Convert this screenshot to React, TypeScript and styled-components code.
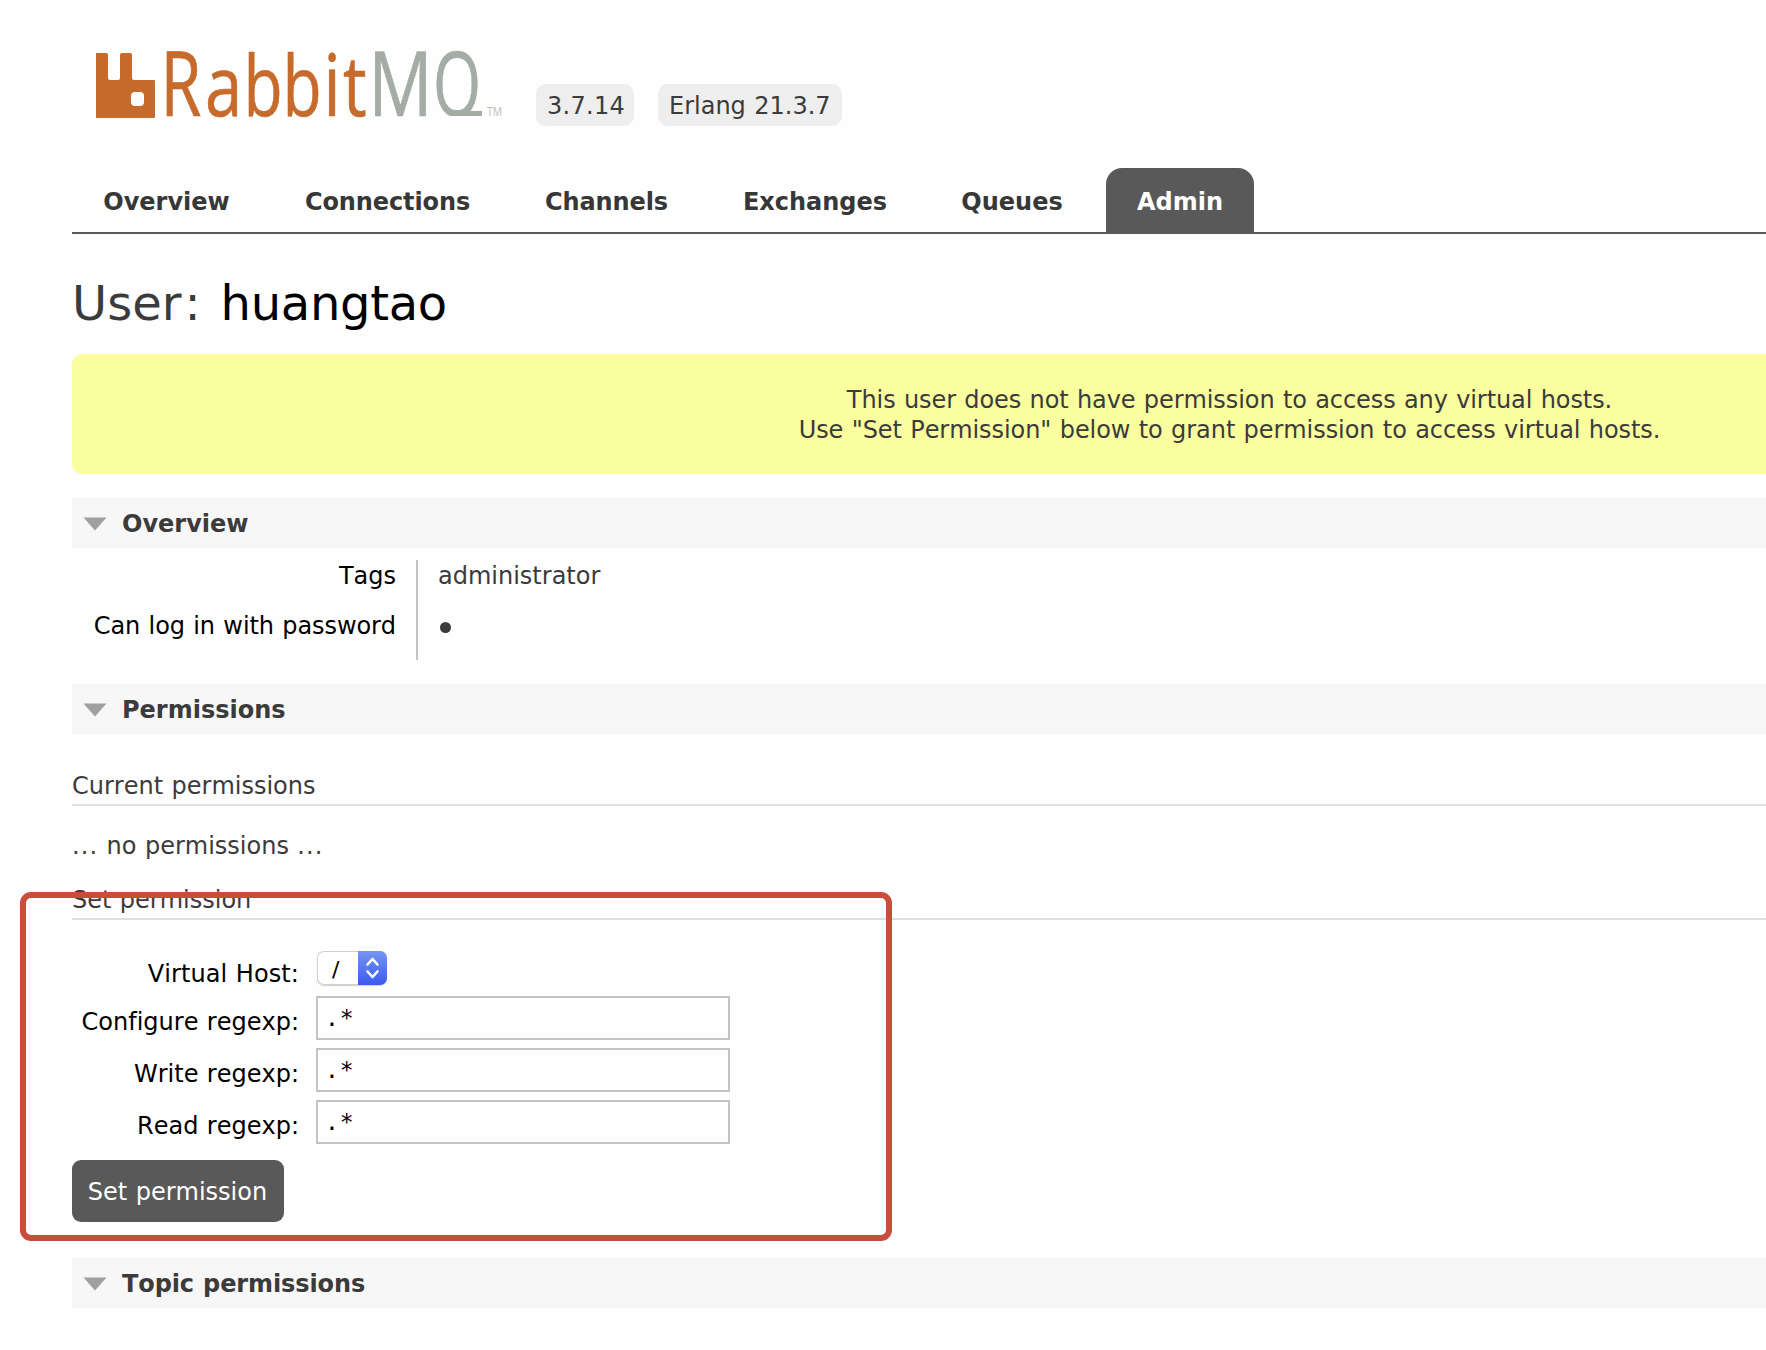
import React from 'react';
import styled, { createGlobalStyle } from 'styled-components';

const GlobalStyle = createGlobalStyle`
  html, body { margin: 0; padding: 0; background: #fefefe; }
  body {
    font-family: Verdana, "DejaVu Sans", sans-serif;
    font-size: 24px;
    line-height: 30px;
    color: #3b3b3b;
    font-kerning: none;
    font-variant-ligatures: none;
    word-spacing: 0.8px;
  }
  *, *::before, *::after { box-sizing: border-box; }
`;

const Page = styled.div`
  position: relative;
  width: 1766px;
  height: 1350px;
  overflow: hidden;
  padding-left: 72px;
`;

const Content = styled.div`
  width: 2315px;
`;

const Text = styled.span<{ $ls?: number }>`
  letter-spacing: ${(p) => p.$ls ?? 0}px;
  white-space: pre;
`;

const Header = styled.header`
  display: flex;
  align-items: flex-start;
  height: 168px;
  padding-left: 24px;
`;

const Logo = styled.svg`
  display: block;
  width: 416px;
  height: 160px;
`;

const Badges = styled.div`
  display: flex;
  gap: 24px;
  margin: 84px 0 0 24px;
`;

const Badge = styled.div<{ $width: number }>`
  width: ${(p) => p.$width}px;
  height: 42px;
  padding-left: 11px;
  border-radius: 10px;
  background: #eeeeee;
  line-height: 44px;
`;

const Tabs = styled.nav`
  display: flex;
  gap: 13px;
  height: 66px;
  border-bottom: 2px solid #595959;
`;

const Tab = styled.a<{ $width: number; $active?: boolean }>`
  width: ${(p) => p.$width}px;
  height: 64px;
  padding-top: 4px;
  border-radius: 16px 16px 0 0;
  background: ${(p) => (p.$active ? '#595959' : 'transparent')};
  color: ${(p) => (p.$active ? '#ffffff' : '#373737')};
  font-weight: bold;
  line-height: 60px;
  text-align: center;
`;

const Title = styled.h1`
  display: flex;
  margin: 39px 0 21px;
  font-size: 48px;
  font-weight: normal;
  line-height: 60px;
`;

const Colon = styled.span`
  margin: 0 20px 0 3px;
`;

const UserName = styled.b`
  color: #000000;
  font-weight: normal;
  letter-spacing: -0.3px;
`;

const Warning = styled.div`
  height: 120px;
  padding-top: 31px;
  border-radius: 10px;
  background: #fbfe9f;
  text-align: center;
`;

const SectionHead = styled.h2<{ $gap: number }>`
  display: flex;
  align-items: center;
  gap: 15px;
  height: 50px;
  margin: ${(p) => p.$gap}px 0 0;
  padding: 2px 0 0 11px;
  background: #f7f7f7;
  font-size: 24px;
  font-weight: bold;
  line-height: 48px;
`;

const Arrow = styled.svg`
  display: block;
  width: 24px;
  height: 14px;
`;

const Facts = styled.dl`
  display: grid;
  grid-template-columns: 346px 400px;
  grid-auto-rows: 50px;
  margin: 12px 0 0;
  line-height: 32px;
`;

const Term = styled.dt`
  padding-right: 20px;
  border-right: 2px solid #c3c3c3;
  color: #000000;
  text-align: right;
`;

const Value = styled.dd`
  margin: 0;
  padding-left: 20px;
`;

const Dot = styled.span`
  display: block;
  width: 11px;
  height: 11px;
  margin: 12px 0 0 2px;
  border-radius: 50%;
  background: #3b3b3b;
`;

const SubHead = styled.h3<{ $gap: number }>`
  margin: ${(p) => p.$gap}px 0 0;
  padding-bottom: 3px;
  border-bottom: 2px solid #dfdfdf;
  font-size: 24px;
  font-weight: normal;
`;

const Note = styled.p`
  margin: 25px 0 0;
`;

const Form = styled.form`
  display: flex;
  flex-direction: column;
  align-items: flex-start;
  gap: 8px;
  margin-top: 31px;
`;

const Field = styled.div<{ $height?: number }>`
  display: flex;
  align-items: flex-start;
  gap: 17px;
  height: ${(p) => p.$height ?? 44}px;
`;

const Label = styled.label<{ $drop?: number }>`
  width: 227px;
  padding-top: ${(p) => p.$drop ?? 11}px;
  color: #000000;
  text-align: right;
`;

const Input = styled.input`
  width: 414px;
  height: 44px;
  padding: 1px 8px 1px 7px;
  border: 2px solid #c3c3c3;
  border-radius: 0;
  outline: none;
  background: #ffffff;
  color: #000000;
  font: 23px "DejaVu Sans Mono", monospace;
  letter-spacing: 1px;
`;

const Select = styled.div`
  display: flex;
  justify-content: space-between;
  width: 70px;
  height: 34px;
  margin-left: 1px;
  padding-left: 15px;
  border-radius: 7px;
  background: #ffffff;
  box-shadow: inset 0 0 0 1px #cfcfcf, 0 1px 1px rgba(0, 0, 0, 0.18);
  color: #000000;
  font: 22px/37px "DejaVu Sans", sans-serif;
  overflow: hidden;
`;

const Stepper = styled.svg`
  display: block;
  width: 29px;
  height: 34px;
  background: linear-gradient(#7595f3, #3b5aef);
`;

const Submit = styled.button`
  width: 212px;
  height: 62px;
  margin-top: 8px;
  padding: 2px 1px 0 0;
  border: 0;
  border-radius: 9px;
  background: #595959;
  color: #ffffff;
  font: inherit;
  line-height: 60px;
  word-spacing: inherit;
`;

const Highlight = styled.div`
  position: absolute;
  left: 20px;
  top: 892px;
  width: 872px;
  height: 349px;
  border: 6px solid #c94d3b;
  border-radius: 11px;
  pointer-events: none;
`;

const ORANGE = '#c66b2c';
const GREY = '#a4aca6';

const wordmark = [
  { ch: 'R', x: 160.5, sx: 0.74, sy: 1, fill: ORANGE },
  { ch: 'a', x: 205, sx: 0.75, sy: 0.94, fill: ORANGE },
  { ch: 'b', x: 243.5, sx: 0.715, sy: 0.94, fill: ORANGE },
  { ch: 'b', x: 282.5, sx: 0.715, sy: 0.94, fill: ORANGE },
  { ch: 'i', x: 323.2, sx: 0.78, sy: 0.95, fill: ORANGE },
  { ch: 't', x: 343, sx: 0.74, sy: 0.94, fill: ORANGE },
  { ch: 'M', x: 368.3, sx: 0.8, sy: 1, fill: GREY },
];

function RabbitLogo() {
  return (
    <Logo viewBox="96 0 416 160">
      <defs>
        <clipPath id="bowl">
          <rect x="430" y="0" width="60" height="116" />
        </clipPath>
      </defs>
      <path
        fill={ORANGE}
        fillRule="evenodd"
        d="M96 53h10q2 0 2 2v23q0 2 2 2h8q2 0 2-2V55q0-2 2-2h8q2 0 2 2v23q0 2 2 2h20q1 0 1 1v36q0 1-1 1H96zM135 92q-4 0-4 4v6q0 4 4 4h5q4 0 4-4v-6q0-4-4-4z"
      />
      <g fontFamily='"Open Sans", sans-serif' fontSize="89.6" strokeWidth="0.7">
        {wordmark.map((g, i) => (
          <text key={i} fill={g.fill} stroke={g.fill} transform={`translate(${g.x} 116) scale(${g.sx} ${g.sy})`}>
            {g.ch}
          </text>
        ))}
        <g clipPath="url(#bowl)">
          <text fill={GREY} stroke={GREY} transform="translate(433 116) scale(0.69 1)">Q</text>
        </g>
      </g>
      <rect x="455" y="111" width="27" height="5" fill={GREY} />
      <text x="487" y="116" fontFamily='"Open Sans", sans-serif' fontSize="13" textLength="15" lengthAdjust="spacingAndGlyphs" fill="#b9bfba">
        TM
      </text>
    </Logo>
  );
}

const tabs = [
  { name: 'Overview', width: 189 },
  { name: 'Connections', width: 227, ls: -0.1 },
  { name: 'Channels', width: 185, ls: -0.1 },
  { name: 'Exchanges', width: 206 },
  { name: 'Queues', width: 162 },
  { name: 'Admin', width: 148, active: true },
];

function Section({ title, gap, ls }: { title: string; gap: number; ls?: number }) {
  return (
    <SectionHead $gap={gap}>
      <Arrow viewBox="0 0 24 14">
        <path d="M0.500 0.500h23L12 13.500z" fill="#a0a0a0" />
      </Arrow>
      <Text $ls={ls}>{title}</Text>
    </SectionHead>
  );
}

export default function App() {
  return (
    <Page>
      <GlobalStyle />
      <Content>
        <Header>
          <RabbitLogo />
          <Badges>
            <Badge $width={98}><Text $ls={0.3}>3.7.14</Text></Badge>
            <Badge $width={184}><Text>Erlang 21.3.7</Text></Badge>
          </Badges>
        </Header>
        <Tabs>
          {tabs.map((t) => (
            <Tab key={t.name} $width={t.width} $active={t.active}>
              <Text $ls={t.ls}>{t.name}</Text>
            </Tab>
          ))}
        </Tabs>
        <Title>
          User<Colon>:</Colon>
          <UserName>huangtao</UserName>
        </Title>
        <Warning>
          <Text $ls={-0.08}>This user does not have permission to access any virtual hosts.</Text>
          <br />
          <Text $ls={-0.06}>Use "Set Permission" below to grant permission to access virtual hosts.</Text>
        </Warning>

        <Section title="Overview" gap={24} />
        <Facts>
          <Term><Text>Tags</Text></Term>
          <Value><Text>administrator</Text></Value>
          <Term><Text $ls={-0.08}>Can log in with password</Text></Term>
          <Value><Dot /></Value>
        </Facts>

        <Section title="Permissions" gap={24} />
        <SubHead $gap={37}><Text>Current permissions</Text></SubHead>
        <Note>
          <Text $ls={1.1}>...</Text>
          <Text> no permissions </Text>
          <Text $ls={1.1}>...</Text>
        </Note>
        <SubHead $gap={24}><Text>Set permission</Text></SubHead>
        <Form>
          <Field $height={37}>
            <Label $drop={8}><Text $ls={0.08}>Virtual Host:</Text></Label>
            <Select>
              /
              <Stepper viewBox="0 0 29 34" fill="none" stroke="#ffffff" strokeWidth="2.600" strokeLinecap="round" strokeLinejoin="round">
                <path d="M9.500 13.500l5-5.500 5 5.500M9.500 20.500l5 5.500 5-5.500" />
              </Stepper>
            </Select>
          </Field>
          {['Configure', 'Write', 'Read'].map((name) => (
            <Field key={name}>
              <Label><Text>{name} regexp:</Text></Label>
              <Input type="text" defaultValue=".*" />
            </Field>
          ))}
          <Submit type="button"><Text>Set permission</Text></Submit>
        </Form>

        <Section title="Topic permissions" gap={36} ls={-0.1} />
      </Content>
      <Highlight />
    </Page>
  );
}
